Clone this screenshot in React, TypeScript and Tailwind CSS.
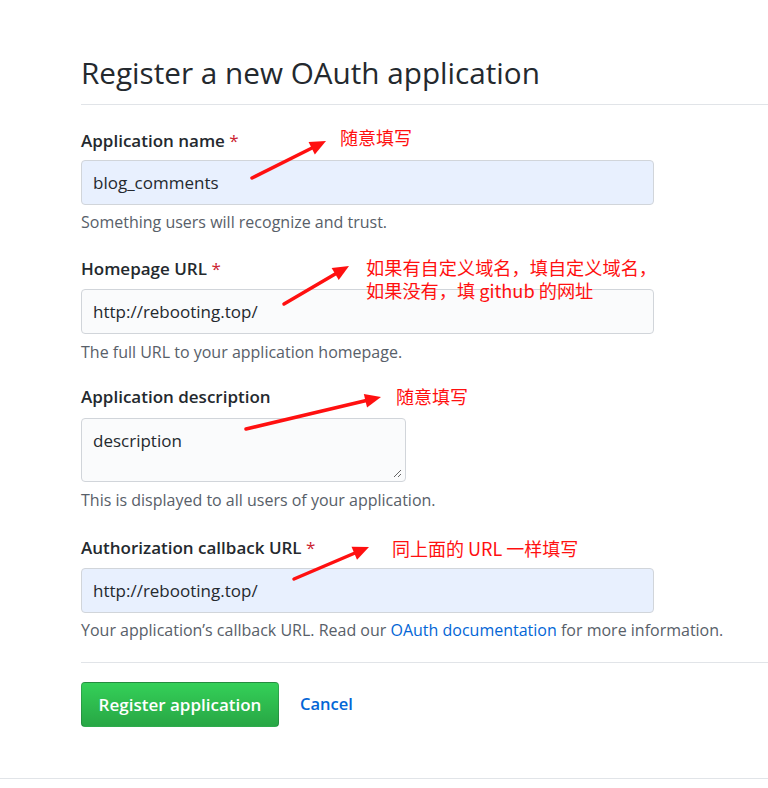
import React from "react";

const font = { fontFamily: '"Open Sans", "Noto Sans", sans-serif' };

function Label({ text, required }: { text: string; required?: boolean }) {
  return (
    <div className="text-[17px] leading-[24px] font-semibold text-[#24292e]">
      {text}
      {required && <span className="text-[#cb2431] font-normal"> *</span>}
    </div>
  );
}

function Note({ children }: { children: React.ReactNode }) {
  return <div className="text-[16px] leading-[21px] text-[#586069]">{children}</div>;
}

function Input({ value, autofill }: { value: string; autofill?: boolean }) {
  return (
    <div
      className={`w-[573px] h-[45px] rounded-[4px] border border-[#d1d5da] flex items-center pl-[11px] text-[17px] text-[#24292e] ${
        autofill ? "bg-[#e8f0fe]" : "bg-[#fafbfc]"
      }`}
    >
      {value}
    </div>
  );
}

const red = "#ff1010";

function Arrow({ x1, y1, x2, y2 }: { x1: number; y1: number; x2: number; y2: number }) {
  const dx = x2 - x1;
  const dy = y2 - y1;
  const len = Math.sqrt(dx * dx + dy * dy);
  const ux = dx / len;
  const uy = dy / len;
  const hl = 16;
  const hw = 7;
  const bx = x2 - ux * hl;
  const by = y2 - uy * hl;
  const px = -uy;
  const py = ux;
  return (
    <g>
      <line x1={x1} y1={y1} x2={bx + ux * 2} y2={by + uy * 2} stroke={red} strokeWidth={3.5} strokeLinecap="round" />
      <polygon
        points={`${x2},${y2} ${bx + px * hw},${by + py * hw} ${bx - px * hw},${by - py * hw}`}
        fill={red}
      />
    </g>
  );
}

export default function App() {
  return (
    <div className="relative w-[768px] h-[788px] bg-white overflow-hidden" style={font}>
      <div className="flex flex-col pl-[81px]">
        <div className="pt-[54px] pb-[12px] border-b border-[#e1e4e8]">
          <h1 className="text-[29.7px] leading-[38px] font-normal text-[#24292e]">
            Register a new OAuth application
          </h1>
        </div>

        <div className="mt-[24px]">
          <Label text="Application name" required />
        </div>
        <div className="mt-[7px]">
          <Input value="blog_comments" autofill />
        </div>
        <div className="mt-[7px]">
          <Note>Something users will recognize and trust.</Note>
        </div>

        <div className="mt-[24px]">
          <Label text="Homepage URL" required />
        </div>
        <div className="mt-[8px]">
          <Input value="http://rebooting.top/" />
        </div>
        <div className="mt-[8px]">
          <Note>The full URL to your application homepage.</Note>
        </div>

        <div className="mt-[22px]">
          <Label text="Application description" />
        </div>
        <div className="mt-[9px] relative w-[325px] h-[64px] rounded-[4px] border border-[#d1d5da] bg-[#fafbfc] pl-[11px] pt-[10px] text-[17px] leading-[24px] text-[#24292e]">
          description
          <svg className="absolute right-[3px] bottom-[3px]" width="9" height="9" viewBox="0 0 9 9">
            <line x1="1" y1="8" x2="8" y2="1" stroke="#666" strokeWidth="1" />
            <line x1="5" y1="8" x2="8" y2="5" stroke="#666" strokeWidth="1" />
          </svg>
        </div>
        <div className="mt-[8px]">
          <Note>This is displayed to all users of your application.</Note>
        </div>

        <div className="mt-[25px]">
          <Label text="Authorization callback URL" required />
        </div>
        <div className="mt-[8px]">
          <Input value="http://rebooting.top/" autofill />
        </div>
        <div className="mt-[7px]">
          <Note>
            Your application’s callback URL. Read our{" "}
            <span className="text-[#0366d6]">OAuth documentation</span> for more information.
          </Note>
        </div>

        <div className="mt-[21px] border-t border-[#e1e4e8]" />

        <div className="mt-[19px] flex items-center">
          <div className="w-[198px] h-[45px] rounded-[4px] border border-[rgba(27,31,35,0.2)] bg-gradient-to-b from-[#34d058] to-[#28a745] flex items-center justify-center text-white text-[17px] font-semibold">
            Register application
          </div>
          <div className="ml-[21px] text-[16.5px] font-semibold text-[#0366d6]">Cancel</div>
        </div>
      </div>

      <div className="absolute left-0 right-0 top-[778px] border-t border-[#e1e4e8]" />

      <svg className="absolute left-0 top-0 pointer-events-none" width="768" height="788">
        <Arrow x1={252} y1={178} x2={326} y2={141} />
        <Arrow x1={284} y1={304} x2={349} y2={266} />
        <Arrow x1={246} y1={429} x2={381} y2={397} />
        <Arrow x1={294} y1={579} x2={369} y2={547} />
      </svg>

      <div
        className="absolute text-[18px] leading-[23px] text-[#ff1010]"
        style={{ left: 340, top: 126, fontFamily: '"Noto Sans CJK SC", sans-serif' }}
      >
        随意填写
      </div>
      <div
        className="absolute text-[18.2px] leading-[23px] text-[#ff1010]"
        style={{ left: 366, top: 256, fontFamily: '"Noto Sans CJK SC", sans-serif' }}
      >
        如果有自定义域名，填自定义域名，
        <br />
        如果没有，填 github 的网址
      </div>
      <div
        className="absolute text-[18px] leading-[23px] text-[#ff1010]"
        style={{ left: 396, top: 385, fontFamily: '"Noto Sans CJK SC", sans-serif' }}
      >
        随意填写
      </div>
      <div
        className="absolute text-[18px] leading-[23px] text-[#ff1010]"
        style={{ left: 392, top: 537, fontFamily: '"Noto Sans CJK SC", sans-serif' }}
      >
        同上面的 URL 一样填写
      </div>
    </div>
  );
}
